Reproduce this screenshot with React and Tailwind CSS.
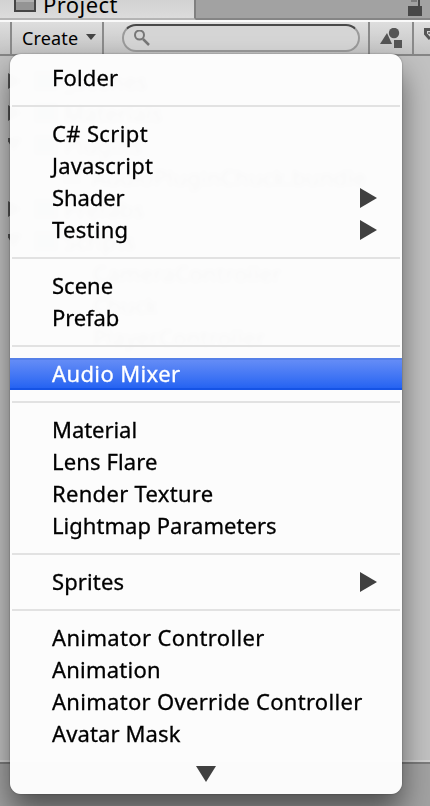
const groups = [
  [['Folder', 'tracking-[0.12px]']],
  [
    ['C# Script', 'tracking-[0.36px]'],
    ['Javascript', 'tracking-[0.18px]'],
    ['Shader', 'tracking-[-0.1px]', true],
    ['Testing', 'tracking-[0.28px]', true],
  ],
  [['Scene', 'tracking-[0px]'], ['Prefab', 'tracking-[-0.1px]']],
  [['Audio Mixer', 'tracking-[0.38px]']],
  [
    ['Material', 'tracking-[-0.05px]'],
    ['Lens Flare', 'tracking-[0.12px]'],
    ['Render Texture', 'tracking-[0.3px]'],
    ['Lightmap Parameters', 'tracking-[0.03px]'],
  ],
  [['Sprites', 'tracking-[0.12px]', true]],
  [
    ['Animator Controller', 'tracking-[0.36px]'],
    ['Animation', 'tracking-[0.22px]'],
    ['Animator Override Controller', 'tracking-[0.3px]'],
    ['Avatar Mask', 'tracking-[0.12px]'],
  ],
];

const tree = [
  ['_Scenes', 'right', 'folder'],
  ['Materials', 'right', 'folder'],
  ['Plugins', 'down', 'folder'],
  ['AudioPluginChuck.bundle', 'none', 'bundle'],
  ['Prefabs', 'right', 'folder'],
  ['Scripts', 'down', 'folder'],
  ['CameraController', 'none', 'script'],
  ['Chuck', 'none', 'script'],
  ['PlayerController', 'none', 'script'],
];

const gutters = {
  folder: 'ml-3 mr-1.5 h-5 w-6 bg-[#7d8b91]',
  bundle: 'ml-[38px] mr-2 h-5 w-6 bg-[#a9a9a9]',
  script: 'ml-[71px]',
};

function Row({ label, tracking, sub }) {
  const active = label === 'Audio Mixer';
  return (
    <div
      className={`flex h-8 items-center justify-between pl-[42px] pr-[25px] text-[22px] ${tracking} ${
        active
          ? 'border-y-2 border-t-[#5580e8] border-b-[#1553e6] bg-linear-to-b from-[#648cf6] to-[#2563f2] text-white'
          : 'text-black'
      }`}
    >
      <span className="mb-0.5 whitespace-nowrap leading-7 [-webkit-text-stroke:0.3px_currentColor]">{label}</span>
      {sub && (
        <svg width="17" height="20" viewBox="0 0 17 20">
          <path d="M0 0L17 10L0 20Z" fill="#404040" />
        </svg>
      )}
    </div>
  );
}

export default function App() {
  return (
    <div className="relative flex h-[806px] w-[430px] flex-col overflow-hidden bg-[#c2c2c2] font-['Noto_Sans',sans-serif] text-black">
      <div className="flex h-5 shrink-0 border-b-2 border-[#858585] bg-[#a2a2a2]">
        <div className="-mb-0.5 flex h-5 w-[196px] items-start border-r-2 border-b-2 border-r-[#808080] border-b-[#b4b4b4] bg-linear-to-b from-[#d2d2d2] to-[#dcdcdc] pl-3.5">
          <svg width="22" height="12" viewBox="0 0 22 12">
            <path d="M1 0v11h20V0" fill="#949494" stroke="#444" strokeWidth="2" />
            <path d="M2 1h18" stroke="#b0b0b0" strokeWidth="2" />
          </svg>
          <span className="-mt-[11px] ml-[7px] text-[22px] leading-[30px] tracking-[0.45px]">
            Project
          </span>
        </div>
        <svg className="ml-auto mr-2" width="14" height="16" viewBox="0 0 14 16">
          <path d="M0 6h14v10H0z" fill="#484848" />
          <path d="M11 0v6" stroke="#484848" strokeWidth="2" />
          <path d="M3 0h6v2H3z" fill="#7c7c7c" />
        </svg>
      </div>
      <div className="flex h-9 shrink-0 items-stretch border-t-2 border-b-2 border-t-[#fafafa] border-b-[#868686] bg-linear-to-b from-[#dedede] to-[#c4c4c4]">
        <div className="ml-2.5 flex w-[94px] border-x-2 border-[#8a8a8a] pl-2.5">
          <span className="text-[18px] leading-8 tracking-[0.15px]">Create</span>
          <svg className="ml-2 mt-3" width="10" height="6" viewBox="0 0 10 6">
            <path d="M0 0h10L5 6Z" fill="#444" />
          </svg>
        </div>
        <div className="ml-[18px] mt-0.5 h-7 w-[238px] rounded-full border-2 border-[#9a9a9a] border-t-[#484848] bg-[#d5d5d5] pl-2.5 pt-1">
          <svg width="18" height="18" viewBox="0 0 18 18" fill="none" stroke="#777" strokeWidth="2">
            <circle cx="5.5" cy="5" r="4.5" />
            <path d="M9 9l6 6" strokeWidth="2.5" />
          </svg>
        </div>
        <div className="ml-2 flex w-[46px] border-x-2 border-[#8a8a8a] pl-2.5">
          <svg className="mt-1.5" width="22" height="20" viewBox="0 0 22 20" fill="#555">
            <path d="M0 16L7 5l5 11Z" />
            <circle cx="14" cy="5" r="5.2" />
            <path d="M13 11h10v9H13z" fill="#cfcfcf" />
            <path d="M14 12h8v8h-8z" />
          </svg>
        </div>
        <svg className="ml-2.5 mt-1.5" width="6" height="14" viewBox="0 0 6 14">
          <path d="M6 1.5H1.5V6L6 11" fill="none" stroke="#555" strokeWidth="3" />
          <path d="M4 4h2v2H4z" fill="#777" />
        </svg>
      </div>
      <div className="flex h-[706px] shrink-0 flex-col border-b-2 border-[#d0d0d0] pt-[9px]">
        {tree.map(([name, arrow, kind]) => (
          <div key={name} className="flex h-8 shrink-0 items-center pl-2 text-[22px] tracking-[0.3px]">
            <svg width="14" height="18" viewBox="0 0 14 18" fill="#555">
              {arrow === 'right' && <path d="M0 1l13 8L0 17Z" />}
              {arrow === 'down' && <path d="M-2 2h16L6 15Z" />}
            </svg>
            <div className={gutters[kind]} />
            <span>{name}</span>
          </div>
        ))}
      </div>
      <div className="grow border-t-2 border-[#7c7c7c] bg-[#a2a2a2]" />

      <div className="absolute left-2.5 top-[54px] h-[740px] w-[392px] overflow-hidden rounded-[11px] bg-[#fdfdfd]/98 pt-2 shadow-[0_0_2px_rgba(0,0,0,0.4),0_18px_30px_rgba(0,0,0,0.5)] backdrop-blur-[2px]">
        {groups.map((items, i) => (
          <div key={i}>
            {i > 0 && (
              <div className="flex h-6 items-center px-0.5">
                <div className="h-0.5 w-full bg-[#e2e2e2]" />
              </div>
            )}
            {items.map(([label, tracking, sub]) => (
              <Row key={label} label={label} tracking={tracking} sub={sub} />
            ))}
          </div>
        ))}
        <svg className="mx-auto mt-4" width="20" height="16" viewBox="0 0 20 16">
          <path d="M0 0h20L10 16Z" fill="#404040" />
        </svg>
      </div>
    </div>
  );
}
